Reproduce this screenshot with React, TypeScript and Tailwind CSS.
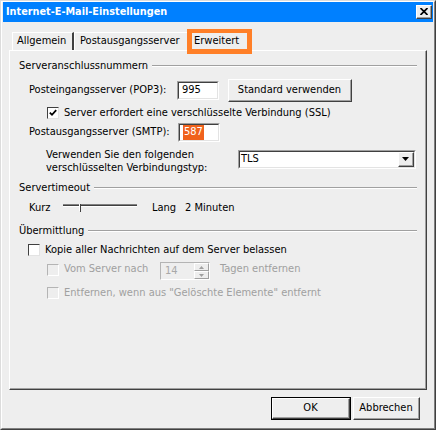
import React from "react";

function Sunken({ className = "", inner = "bg-white", children }: { className?: string; inner?: string; children?: React.ReactNode }) {
  return (
    <div className={"flex border-t border-l border-t-[#a0a0a0] border-l-[#a0a0a0] border-b border-r border-b-white border-r-white " + className}>
      <div className={"flex flex-1 items-center border-t border-l border-t-[#404040] border-l-[#404040] border-b border-r border-b-[#e3e3e3] border-r-[#e3e3e3] " + inner}>
        {children}
      </div>
    </div>
  );
}

function Raised({ className = "", children }: { className?: string; children?: React.ReactNode }) {
  return (
    <div className={"flex border-t border-l border-t-white border-l-white border-b border-r border-b-[#404040] border-r-[#404040] bg-[#eeeeee] " + className}>
      <div className="flex flex-1 items-center justify-center border-b border-r border-b-[#a0a0a0] border-r-[#a0a0a0]">{children}</div>
    </div>
  );
}

function Check({ checked = false, disabled = false }: { checked?: boolean; disabled?: boolean }) {
  return (
    <div
      className={
        "flex h-[12px] w-[12px] shrink-0 items-center justify-center border " +
        (disabled
          ? "border-t-[#b4b4b4] border-l-[#b4b4b4] border-b-[#ffffff] border-r-[#ffffff] bg-[#eeeeee]"
          : "border-t-[#404040] border-l-[#404040] border-b-[#e3e3e3] border-r-[#e3e3e3] bg-white")
      }
    >
      {checked && (
        <svg width="8" height="8" viewBox="0 0 8 8">
          <path d="M0.8 3.6 L3 5.8 L7.2 1.2" fill="none" stroke="#000" strokeWidth="1.8" />
        </svg>
      )}
    </div>
  );
}

function Header({ children, className = "" }: { children: React.ReactNode; className?: string }) {
  return (
    <div className={"flex h-[16px] items-center pl-[9px] pr-[8px] " + className}>
      <span className="whitespace-nowrap">{children}</span>
      <div className="ml-[4px] flex flex-1 flex-col">
        <div className="h-[1px] bg-[#a0a0a0]" />
        <div className="h-[1px] bg-white" />
      </div>
    </div>
  );
}

export default function App() {
  return (
    <div className="h-[430px] w-[436px] border border-t-[#dcdcdc] border-l-[#dcdcdc] border-b-[#404040] border-r-[#404040] bg-[#eeeeee] font-['DejaVu_Sans_Condensed',sans-serif] text-[11px] text-black">
      <div className="flex h-full flex-col border border-t-white border-l-white border-b-[#808080] border-r-[#808080] px-[1px]">
        {/* Title bar */}
        <div className="flex h-[20px] items-center justify-between bg-[#0080ff] pl-[3px] pr-[1px]">
          <span className="text-[10.8px] font-bold text-white">Internet-E-Mail-Einstellungen</span>
          <Raised className="h-[14px] w-[16px]">
            <svg width="8" height="7" viewBox="0 0 8 7">
              <path d="M0.5 0 L7.5 7 M7.5 0 L0.5 7" stroke="#000" strokeWidth="1.7" />
            </svg>
          </Raised>
        </div>

        {/* Tabs */}
        <div className="ml-[6px] flex h-[28px] items-end pl-[3px]">
          <div className="flex h-[18px] w-[62px] items-center border-t border-l border-t-white border-l-white border-r-2 border-r-[#404040] pl-[4px]">
            Allgemein
          </div>
          <div className="flex h-[18px] w-[113px] items-center border-t border-l border-t-white border-l-white pl-[5px]">
            Postausgangsserver
          </div>
          <div className="relative z-10 -mb-[1px] flex h-[21px] w-[62px] items-center border-t border-l border-r border-t-white border-l-white border-r-[#404040] bg-[#eeeeee] pl-[6px]">
            Erweitert
            <div className="absolute -left-[1px] -top-[2px] h-[25px] w-[65px] border-[5px] border-t-4 border-[#ff7f27]" />
          </div>
        </div>

        {/* Panel */}
        <div className="ml-[6px] flex h-[340px] w-[418px] border-t border-l border-t-white border-l-white border-b border-r border-b-[#404040] border-r-[#404040]">
          <div className="flex flex-1 flex-col border-b border-r border-b-[#a0a0a0] border-r-[#a0a0a0]">
            <Header className="mt-[7px]">Serveranschlussnummern</Header>

            <div className="mt-[5px] flex h-[23px] items-center pl-[19px]">
              <span className="w-[148px]">Posteingangsserver (POP3):</span>
              <Sunken className="h-[19px] w-[42px]">
                <span className="pl-[3px]">995</span>
              </Sunken>
              <Raised className="ml-[9px] h-[23px] w-[124px]">Standard verwenden</Raised>
            </div>

            <div className="mt-[3px] flex h-[16px] items-center pl-[37px]">
              <Check checked />
              <span className="ml-[5px]">Server erfordert eine verschlüsselte Verbindung (SSL)</span>
            </div>

            <div className="mt-[2px] flex h-[19px] items-center pl-[19px]">
              <span className="w-[149px]">Postausgangsserver (SMTP):</span>
              <Sunken className="h-[19px] w-[42px]" inner="bg-white items-stretch">
                <span className="ml-[3px] flex items-center bg-[#f0621c] px-[1px] text-white">587</span>
              </Sunken>
            </div>

            <div className="mt-[6px] flex h-[26px] items-start">
              <div className="ml-[36px] w-[192px] leading-[13px]">
                Verwenden Sie den folgenden
                <br />
                verschlüsselten Verbindungstyp:
              </div>
              <Sunken className="mt-[2px] h-[19px] w-[178px]" inner="bg-white items-stretch">
                <span className="flex flex-1 items-center pl-[1px]">TLS</span>
                <Raised className="w-[16px]">
                  <svg width="7" height="4" viewBox="0 0 7 4">
                    <path d="M0 0 H7 L3.5 4 Z" fill="#000" />
                  </svg>
                </Raised>
              </Sunken>
            </div>

            <Header className="mt-[6px]">Servertimeout</Header>

            <div className="mt-[4px] flex h-[16px] items-center pl-[19px]">
              <span className="w-[34px]">Kurz</span>
              <svg width="74" height="16" viewBox="0 0 74 16" className="shrink-0">
                <rect x="0" y="4" width="74" height="1" fill="#808080" />
                <rect x="0" y="5" width="74" height="1" fill="#404040" />
                <rect x="0" y="6" width="74" height="1" fill="#ffffff" />
                <rect x="16" y="4" width="1" height="7" fill="#ffffff" />
                <rect x="17" y="4" width="1" height="8" fill="#404040" />
              </svg>
              <span className="ml-[15px] w-[33px]">Lang</span>
              <span>2 Minuten</span>
            </div>

            <Header className="mt-[7px]">Übermittlung</Header>

            <div className="mt-[3px] flex h-[16px] items-center pl-[18px]">
              <Check />
              <span className="ml-[5px]">Kopie aller Nachrichten auf dem Server belassen</span>
            </div>

            <div className="mt-[4px] flex h-[19px] items-start pl-[37px] text-[#a0a0a0]">
              <div className="mt-[2px]">
                <Check disabled />
              </div>
              <span className="ml-[5px] w-[96px] leading-[14px]">Vom Server nach</span>
              <div className="flex h-[18px] w-[50px] border border-t-[#b4b4b4] border-l-[#b4b4b4] border-b-white border-r-white">
                <span className="flex flex-1 items-center pl-[4px] text-[#a8a8a8]">14</span>
                <div className="flex w-[15px] flex-col">
                  <div className="flex flex-1 items-center justify-center border border-t-white border-l-white border-b-[#a0a0a0] border-r-[#a0a0a0]">
                    <svg width="5" height="3" viewBox="0 0 5 3">
                      <path d="M0 3 H5 L2.5 0 Z" fill="#a0a0a0" />
                    </svg>
                  </div>
                  <div className="flex flex-1 items-center justify-center border border-t-white border-l-white border-b-[#a0a0a0] border-r-[#a0a0a0]">
                    <svg width="5" height="3" viewBox="0 0 5 3">
                      <path d="M0 0 H5 L2.5 3 Z" fill="#a0a0a0" />
                    </svg>
                  </div>
                </div>
              </div>
              <span className="ml-[10px] leading-[14px]">Tagen entfernen</span>
            </div>

            <div className="mt-[4px] flex h-[16px] items-center pl-[37px] text-[#a0a0a0]">
              <Check disabled />
              <span className="ml-[5px]">Entfernen, wenn aus "Gelöschte Elemente" entfernt</span>
            </div>
          </div>
        </div>

        {/* Buttons */}
        <div className="flex justify-end gap-[2px] pr-[13px] pt-[7px]">
          <div className="flex h-[23px] w-[80px] border border-black">
            <Raised className="flex-1">OK</Raised>
          </div>
          <Raised className="h-[23px] w-[67px]">Abbrechen</Raised>
        </div>
      </div>
    </div>
  );
}
